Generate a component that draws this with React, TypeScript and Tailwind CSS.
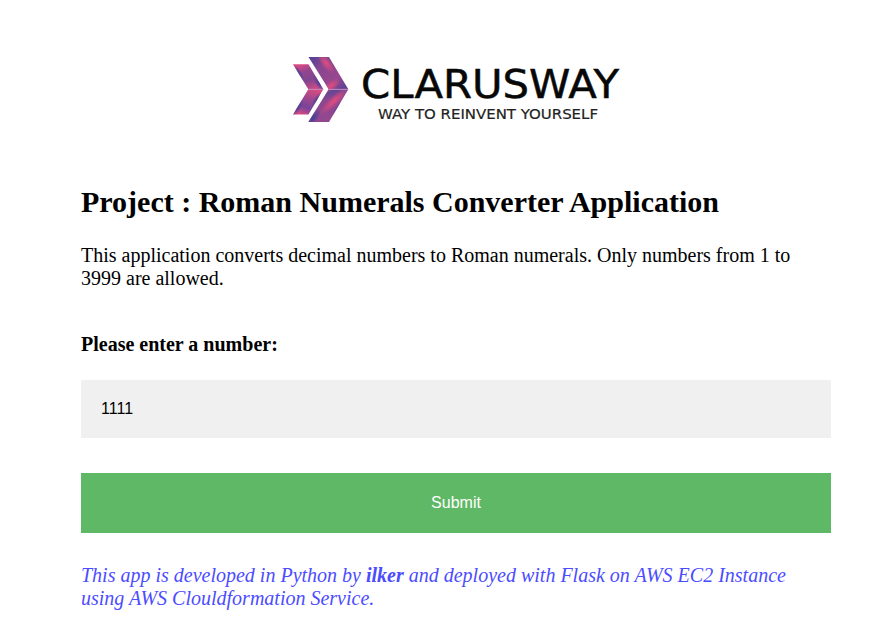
function Logo() {
  return (
    <svg width="330" height="68" viewBox="291 56 330 68" role="img" aria-label="Clarusway">
      <defs>
        <linearGradient id="bigTop" gradientUnits="userSpaceOnUse" x1="309" y1="57" x2="345" y2="92">
          <stop offset="0" stopColor="#4f4298" />
          <stop offset="0.3" stopColor="#87468f" />
          <stop offset="0.7" stopColor="#99488e" />
          <stop offset="1" stopColor="#4b4196" />
        </linearGradient>
        <linearGradient id="bigBottom" gradientUnits="userSpaceOnUse" x1="326" y1="88" x2="334" y2="122">
          <stop offset="0" stopColor="#4e4298" />
          <stop offset="0.35" stopColor="#8c478f" />
          <stop offset="1" stopColor="#95478f" />
        </linearGradient>
        <linearGradient id="smallTop" gradientUnits="userSpaceOnUse" x1="302" y1="64" x2="312" y2="89">
          <stop offset="0" stopColor="#dc4a80" />
          <stop offset="0.3" stopColor="#93458f" />
          <stop offset="0.65" stopColor="#81458f" />
          <stop offset="1" stopColor="#c84b86" />
        </linearGradient>
        <linearGradient id="smallBottom" gradientUnits="userSpaceOnUse" x1="312" y1="89" x2="302" y2="115">
          <stop offset="0" stopColor="#d64b82" />
          <stop offset="0.35" stopColor="#a0478e" />
          <stop offset="0.7" stopColor="#78449a" />
          <stop offset="1" stopColor="#dc4a80" />
        </linearGradient>
        <radialGradient id="rose">
          <stop offset="0" stopColor="#e44b7e" />
          <stop offset="1" stopColor="#e44b7e" stopOpacity="0" />
        </radialGradient>
        <radialGradient id="indigo">
          <stop offset="0" stopColor="#413f97" />
          <stop offset="1" stopColor="#413f97" stopOpacity="0" />
        </radialGradient>
        <clipPath id="smallArrow"><path d="M293 64.3H308.5L323.3 89.35L308.5 114.5H293L308.3 89.35Z" /></clipPath>
        <clipPath id="bigArrow"><path d="M308.5 57H329L348.3 89.35L329 122H308.3L328.7 89.35Z" /></clipPath>
      </defs>
      <g clipPath="url(#smallArrow)">
        <path d="M293 64H324V89.35H293Z" fill="url(#smallTop)" />
        <path d="M293 89.35H324V115H293Z" fill="url(#smallBottom)" />
        <ellipse cx="298" cy="73" rx="4" ry="10" transform="rotate(-32 298 73)" fill="url(#indigo)" />
        <ellipse cx="319" cy="83" rx="4" ry="10" transform="rotate(-32 319 83)" fill="url(#indigo)" />
        <ellipse cx="297" cy="108" rx="4" ry="10" transform="rotate(32 297 108)" fill="url(#indigo)" />
        <ellipse cx="317" cy="100" rx="3.5" ry="9" transform="rotate(32 317 100)" fill="url(#indigo)" />
      </g>
      <g clipPath="url(#bigArrow)">
        <path d="M308 57H349V89.35H308Z" fill="url(#bigTop)" />
        <path d="M308 89.35H349V122H308Z" fill="url(#bigBottom)" />
        <ellipse cx="326" cy="63" rx="5" ry="13" transform="rotate(-38 326 63)" fill="url(#rose)" />
        <ellipse cx="331" cy="86" rx="11" ry="5" transform="rotate(-35 331 86)" fill="url(#rose)" />
        <ellipse cx="334" cy="101" rx="20" ry="5" transform="rotate(-43 334 101)" fill="url(#rose)" />
        <ellipse cx="313" cy="118" rx="11" ry="5" transform="rotate(-52 313 118)" fill="url(#indigo)" />
        <ellipse cx="338" cy="109" rx="10" ry="3" transform="rotate(-58 338 109)" fill="url(#indigo)" />
      </g>
      <path d="M308.3 89.35H323.3M328.7 89.35H348.3" stroke="#c68abb" strokeWidth="1" />
      <text x="361" y="97.7" textLength="258" lengthAdjust="spacingAndGlyphs" fontSize="39" fill="#080808" stroke="#080808" strokeWidth="0.5" className="font-['DejaVu_Sans',sans-serif]">CLARUSWAY</text>
      <text x="378" y="119" textLength="220" lengthAdjust="spacingAndGlyphs" fontSize="14.4" fill="#222" stroke="#222" strokeWidth="0.2" className="font-['DejaVu_Sans',sans-serif]">WAY TO REINVENT YOURSELF</text>
    </svg>
  );
}

export default function App() {
  return (
    <main className="min-h-[641px] bg-white pl-[81px] pr-[60px] pt-14 font-['Liberation_Serif',serif] text-xl leading-[23px] text-black">
      <header className="flex h-[68px] justify-center">
        <Logo />
      </header>
      <h1 className="mt-[61px] whitespace-nowrap text-[30px] font-bold leading-[34px]">Project : Roman Numerals Converter Application</h1>
      <p className="mt-[25px]">This application converts decimal numbers to Roman numerals. Only numbers from 1 to 3999 are allowed.</p>
      <form onSubmit={(e) => e.preventDefault()}>
        <label htmlFor="number" className="mt-[43px] block font-bold">Please enter a number:</label>
        <input id="number" type="text" defaultValue="1111" className="mt-6 block h-[58px] w-full bg-[#f0f0f0] px-5 font-['Liberation_Sans',sans-serif] text-base outline-none" />
        <button type="submit" className="mt-[35px] block h-[60px] w-full bg-[#5fb865] font-['Liberation_Sans',sans-serif] text-base text-white">Submit</button>
      </form>
      <p className="mt-[31px] italic text-[#4c4cff]">
        This app is developed in Python by <b>ilker</b> and deployed with Flask on AWS EC2 Instance using AWS Clouldformation Service.
      </p>
    </main>
  );
}
